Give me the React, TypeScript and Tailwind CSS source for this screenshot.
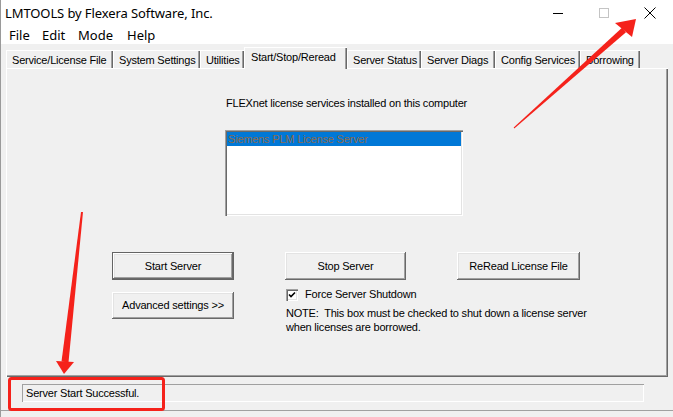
const tabs = [
  { label: 'Service/License File', w: 'w-[107px]' },
  { label: 'System Settings', w: 'w-[87px]' },
  { label: 'Utilities', w: 'w-[44px]' },
  { label: 'Start/Stop/Reread', w: 'w-[103px]', active: true },
  { label: 'Server Status', w: 'w-[74px]' },
  { label: 'Server Diags', w: 'w-[74px]' },
  { label: 'Config Services', w: 'w-[85px]' },
  { label: 'Borrowing', w: 'w-[60px]' },
];

const raised =
  'shadow-[inset_-1px_-1px_#696969,inset_1px_1px_#ffffff,inset_-2px_-2px_#a0a0a0,inset_2px_2px_#e3e3e3]';

const Button = ({ text, w, h, primary }: { text: string; w: string; h: string; primary?: boolean }) => (
  <div
    className={`${w} ${h} flex items-center justify-center bg-[#f0f0f0] ${
      primary ? 'border border-[#646464]' : ''
    } ${raised}`}
  >
    {text}
  </div>
);

const Arrows = () => (
  <svg className="absolute left-0 top-0 pointer-events-none" width="673" height="417" viewBox="0 0 673 417">
    <polygon points="513.7,127.6 622,27.8 626,32.2 514.3,128.4" fill="#f5221b" />
    <polygon points="636,19 615,23 632,37" fill="#f5221b" />
    <polygon points="81,211.9 83,212.1 68.5,362.4 61.5,361.6" fill="#f5221b" />
    <polygon points="64,374 56,361 74,362" fill="#f5221b" />
    <rect x="9.5" y="378.5" width="154" height="31" rx="2" fill="none" stroke="#f5221b" strokeWidth="3" />
  </svg>
);

export default function App() {
  return (
    <div className="relative w-[673px] h-[417px] overflow-hidden bg-[#f0f0f0] text-black font-['Liberation_Sans',Arial,sans-serif]">
      <div className="flex flex-col h-full border-l border-[#9a9a9a]">
        {/* title bar */}
        <div className="h-[26px] bg-white flex items-center pl-[4px]">
          <span className="text-[13px] tracking-[-0.1px] font-['Noto_Sans',sans-serif] leading-none">
            LMTOOLS by Flexera Software, Inc.
          </span>
          <div className="ml-auto flex h-full">
            <div className="w-[46px] flex items-center justify-center">
              <div className="w-[10px] h-px bg-black" />
            </div>
            <div className="w-[46px] flex items-center justify-center">
              <div className="w-[10px] h-[10px] border border-[#c4c4c4]" />
            </div>
            <div className="w-[46px] flex items-center justify-center">
              <svg width="12" height="12" viewBox="0 0 12 12">
                <path d="M0.5 0.5 L11.5 11.5 M11.5 0.5 L0.5 11.5" stroke="#000" strokeWidth="1" />
              </svg>
            </div>
          </div>
        </div>

        {/* menu */}
        <div className="h-[18px] bg-white flex items-center pl-[8px] text-[13px] font-['Noto_Sans',sans-serif] leading-none">
          <span className="w-[33px]">File</span>
          <span className="w-[36px]">Edit</span>
          <span className="w-[49px]">Mode</span>
          <span>Help</span>
        </div>

        {/* tabs */}
        <div className="mt-[3px] h-[21px] flex items-end pl-[5px] text-[11px] tracking-[-0.2px]">
          {tabs.map((t) =>
            t.active ? (
              <div
                key={t.label}
                className={`${t.w} h-[22px] -mb-px relative z-10 bg-[#f0f0f0] border-t border-l border-white shadow-[inset_-1px_0_#696969,inset_-2px_0_#a0a0a0] pl-[6px] pt-[2px] leading-[14px] whitespace-nowrap`}
              >
                {t.label}
              </div>
            ) : (
              <div
                key={t.label}
                className={`${t.w} h-[18px] border-t border-l border-white shadow-[inset_-1px_0_#696969,inset_-2px_0_#a0a0a0] pl-[5px] pt-[2px] leading-[14px] whitespace-nowrap overflow-hidden`}
              >
                {t.label}
              </div>
            )
          )}
        </div>

        {/* panel */}
        <div className="ml-[5px] w-[662px] h-[309px] flex flex-col text-[11px] tracking-[-0.2px] shadow-[inset_1px_1px_#ffffff,inset_-1px_-1px_#696969,inset_-2px_-2px_#a0a0a0]">
          <div className="ml-[220px] mt-[28px] leading-[14px]">FLEXnet license services installed on this computer</div>
          <div className="ml-[219px] mt-[20px] w-[238px] h-[86px] bg-white p-[2px] shadow-[inset_1px_1px_#a0a0a0,inset_2px_2px_#696969,inset_-1px_-1px_#ffffff,inset_-2px_-2px_#e3e3e3]">
            <div className="h-[14px] bg-[#0078d7] text-[#8b6b4e] leading-[14px] pl-[1px]">Siemens PLM License Server</div>
          </div>

          <div className="mt-[36px] ml-[106px] flex gap-[51px]">
            <Button text="Start Server" w="w-[122px]" h="h-[28px]" primary />
            <Button text="Stop Server" w="w-[121px]" h="h-[28px]" />
            <Button text="ReRead License File" w="w-[123px]" h="h-[28px]" />
          </div>

          <div className="ml-[106px] flex items-start gap-[51px]">
            <div className="mt-[12px]">
              <Button text="Advanced settings >>" w="w-[122px]" h="h-[27px]" />
            </div>
            <div className="mt-[8px] flex flex-col">
              <div className="flex items-center h-[13px] ml-[1px]">
                <div className="w-[12px] h-[12px] bg-white shadow-[inset_1px_1px_#a0a0a0,inset_2px_2px_#696969,inset_-1px_-1px_#ffffff,inset_-2px_-2px_#e3e3e3] flex items-center justify-center">
                  <svg width="8" height="8" viewBox="0 0 8 8">
                    <path d="M1 3.5 L3 5.5 L7 1.5" stroke="#000" strokeWidth="1.6" fill="none" />
                  </svg>
                </div>
                <span className="ml-[7px] leading-[13px]">Force Server Shutdown</span>
              </div>
              <div className="mt-[5px] ml-[1px] leading-[14px] whitespace-nowrap">
                <div>NOTE:&nbsp; This box must be checked to shut down a license server</div>
                <div>when licenses are borrowed.</div>
              </div>
            </div>
          </div>
        </div>

        {/* status bar */}
        <div className="mt-[7px] ml-[21px] w-[622px] h-[18px] flex items-center pl-[4px] text-[11px] tracking-[-0.2px] shadow-[inset_1px_1px_#a0a0a0,inset_-1px_-1px_#ffffff]">
          Server Start Successful.
        </div>
        <div className="mt-[8px] h-px bg-[#a0a0a0]" />
      </div>
      <Arrows />
    </div>
  );
}
